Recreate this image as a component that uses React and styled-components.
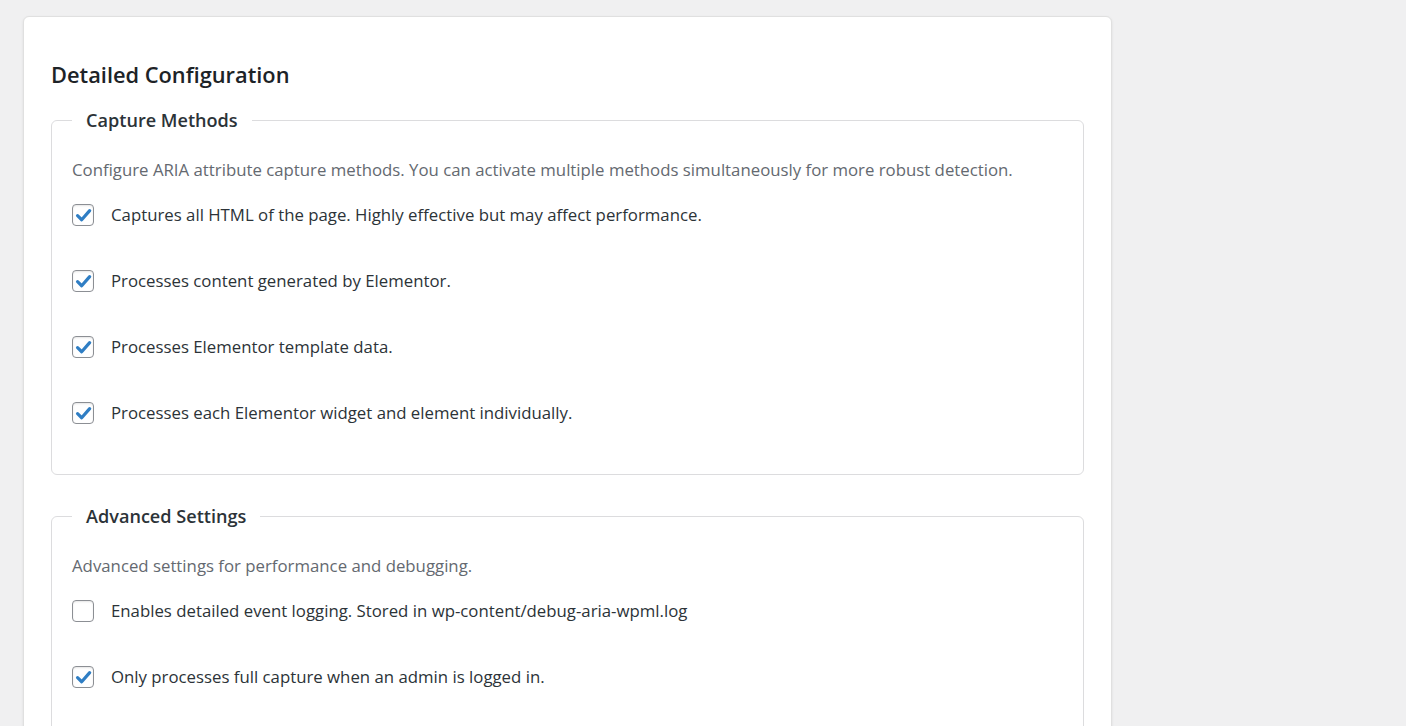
import React from 'react'
import styled, { createGlobalStyle } from 'styled-components'

const GlobalStyle = createGlobalStyle`
  html, body {
    margin: 0;
    padding: 0;
    background: #f0f0f1;
    font-family: "Open Sans", "Noto Sans", sans-serif;
    overflow: hidden;
  }
`

const sections = [
  {
    title: 'Capture Methods',
    description:
      'Configure ARIA attribute capture methods. You can activate multiple methods simultaneously for more robust detection.',
    options: [
      { label: 'Captures all HTML of the page. Highly effective but may affect performance.', checked: true },
      { label: 'Processes content generated by Elementor.', checked: true },
      { label: 'Processes Elementor template data.', checked: true },
      { label: 'Processes each Elementor widget and element individually.', checked: true },
    ],
  },
  {
    title: 'Advanced Settings',
    description: 'Advanced settings for performance and debugging.',
    options: [
      { label: 'Enables detailed event logging. Stored in wp-content/debug-aria-wpml.log', checked: false },
      { label: 'Only processes full capture when an admin is logged in.', checked: true },
    ],
  },
]

const Page = styled.div`
  padding: 16px 0 0 23px;
  height: 726px;
  box-sizing: border-box;
`

const Card = styled.div`
  width: 1089px;
  box-sizing: border-box;
  background: #fff;
  border: 1px solid #e0e0e0;
  border-radius: 6px;
  box-shadow: 0 1px 3px rgba(0, 0, 0, 0.08);
  padding: 27px 27px 40px;
  min-height: 760px;
`

const Title = styled.h2`
  margin: 17px 0 19px;
  font-size: 21.8px;
  line-height: 28px;
  font-weight: 600;
  color: #1d2327;
`

const Group = styled.fieldset`
  margin: 0 0 29px;
  padding: 27px 20px 6px;
  border: 1px solid #dcdcde;
  border-radius: 6px;
`

const Legend = styled.legend`
  padding: 0 14px;
  font-size: 18.1px;
  line-height: 24px;
  font-weight: 600;
  color: #2c3338;
`

const Description = styled.p`
  margin: 0 0 23px;
  font-size: 16.8px;
  line-height: 22px;
  color: #646970;
`

const Option = styled.label`
  display: flex;
  align-items: center;
  gap: 17px;
  margin-bottom: 44px;
  font-size: 16.8px;
  line-height: 22px;
  color: #2c3338;
  cursor: pointer;
`

const Box = styled.span`
  flex: none;
  width: 22px;
  height: 22px;
  box-sizing: border-box;
  border: 1px solid #8c8f94;
  border-radius: 4px;
  background: #fff;
  display: flex;
  align-items: center;
  justify-content: center;
  box-shadow: inset 0 1px 2px rgba(0, 0, 0, 0.1);
`

const Check = () => (
  <svg width="17" height="17" viewBox="0 0 16 16">
    <path d="M2.4 8.2 L6.3 12 L13.8 3.4" fill="none" stroke="#2f7ec4" strokeWidth="3" strokeLinecap="round" strokeLinejoin="round" />
  </svg>
)

const Checkbox = ({ checked }) => <Box>{checked && <Check />}</Box>

const App = () => (
  <>
    <GlobalStyle />
    <Page>
      <Card>
        <Title>Detailed Configuration</Title>
        {sections.map((s) => (
          <Group key={s.title}>
            <Legend>{s.title}</Legend>
            <Description>{s.description}</Description>
            {s.options.map((o) => (
              <Option key={o.label}>
                <Checkbox checked={o.checked} />
                {o.label}
              </Option>
            ))}
          </Group>
        ))}
      </Card>
    </Page>
  </>
)

export default App
